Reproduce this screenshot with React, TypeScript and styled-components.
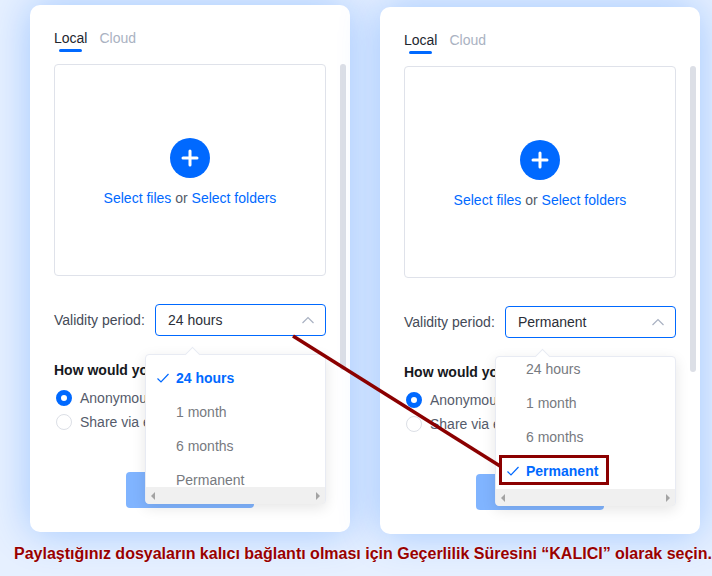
import React from 'react';
import styled, { createGlobalStyle } from 'styled-components';

const GlobalStyle = createGlobalStyle`
  html, body {
    margin: 0;
    padding: 0;
    background: #e6f0ff;
  }
`;

const Page = styled.div`
  position: relative;
  width: 712px;
  height: 576px;
  overflow: hidden;
  font-family: 'Liberation Sans', Arial, sans-serif;
  font-size: 14px;
  background: #e6f0ff;
`;

const Cards = styled.div`
  display: flex;
  align-items: flex-start;
  gap: 30px;
  padding-left: 30px;
  height: 545px;
`;

const Card = styled.section<{ $top: number }>`
  display: flex;
  gap: 14px;
  flex: none;
  box-sizing: border-box;
  width: 320px;
  height: 527px;
  margin-top: ${(p) => p.$top}px;
  padding: 24px 4px 0 24px;
  background: #fff;
  border-radius: 10px;
  box-shadow: 0 0 40px rgba(0, 105, 255, 0.3);
`;

const Content = styled.div`
  flex: none;
  width: 272px;
`;

const CardScroll = styled.div`
  flex: none;
  width: 6px;
  height: 306px;
  margin-top: 35px;
  border-radius: 3px;
  background: #dcdfe6;
`;

const Tabs = styled.div`
  display: flex;
  gap: 12px;
  height: 35px;
`;

const Tab = styled.div<{ $active?: boolean }>`
  position: relative;
  height: 18px;
  line-height: 18px;
  color: ${(p) => (p.$active ? '#22262e' : '#aab2c2')};

  ${(p) =>
    p.$active &&
    `
    &::after {
      content: '';
      position: absolute;
      left: 5px;
      right: 5px;
      top: 20px;
      height: 3px;
      border-radius: 2px;
      background: #0069ff;
    }
  `}
`;

const DropArea = styled.div`
  display: flex;
  flex-direction: column;
  align-items: center;
  box-sizing: border-box;
  height: 212px;
  padding-top: 73px;
  border: 1px solid #dfe2ea;
  border-radius: 4px;
`;

const AddCircle = styled.div`
  display: flex;
  align-items: center;
  justify-content: center;
  width: 40px;
  height: 40px;
  border-radius: 50%;
  background: #0069ff;
`;

const DropText = styled.div`
  margin-top: 12px;
  line-height: 16px;
  color: #555b68;
`;

const Link = styled.span`
  color: #0069ff;
`;

const ValidityRow = styled.div`
  position: relative;
  display: flex;
  align-items: center;
  justify-content: space-between;
  margin-top: 28px;
  height: 32px;
`;

const FieldLabel = styled.span`
  color: #444a57;
`;

const SelectBox = styled.div`
  display: flex;
  align-items: center;
  justify-content: space-between;
  box-sizing: border-box;
  width: 171px;
  height: 32px;
  padding: 0 11px 0 12px;
  border: 1px solid #0069ff;
  border-radius: 4px;
  color: #2b2f38;
`;

const Dropdown = styled.div`
  position: absolute;
  top: 50px;
  right: 0;
  z-index: 2;
  box-sizing: border-box;
  width: 181px;
  height: 150px;
  border: 1px solid #e8ebf3;
  border-radius: 4px;
  background: #fff;
  box-shadow: 0 4px 14px rgba(0, 0, 0, 0.1);

  &::before {
    content: '';
    position: absolute;
    top: -6px;
    left: 41px;
    width: 10px;
    height: 10px;
    background: #fff;
    border-top: 1px solid #e8ebf3;
    border-left: 1px solid #e8ebf3;
    transform: rotate(45deg);
  }
`;

const OptionViewport = styled.div`
  position: relative;
  height: 132px;
  overflow: hidden;
`;

const OptionList = styled.ul<{ $scroll: number }>`
  list-style: none;
  margin: ${(p) => 6 - p.$scroll}px 0 0;
  padding: 0;
`;

const Option = styled.li<{ $selected?: boolean }>`
  position: relative;
  height: 34px;
  line-height: 34px;
  padding-left: 30px;
  color: ${(p) => (p.$selected ? '#0069ff' : '#777a80')};
  font-weight: ${(p) => (p.$selected ? 700 : 400)};

  svg {
    position: absolute;
    left: 10px;
    top: 11px;
  }
`;

const HScroll = styled.div`
  display: flex;
  align-items: center;
  justify-content: space-between;
  height: 17px;
  padding: 0 5px;
  background: #f0f0f0;
  border-radius: 0 0 4px 4px;
`;

const Arrow = styled.span<{ $dir: 'left' | 'right' }>`
  width: 0;
  height: 0;
  border-top: 4px solid transparent;
  border-bottom: 4px solid transparent;
  ${(p) =>
    p.$dir === 'left'
      ? 'border-right: 4px solid #a3a3a3;'
      : 'border-left: 4px solid #a3a3a3;'}
`;

const Heading = styled.div`
  margin-top: 25px;
  height: 18px;
  line-height: 18px;
  font-weight: 700;
  color: #16181d;
`;

const RadioGroup = styled.div`
  display: flex;
  flex-direction: column;
  gap: 8px;
  margin-top: 11px;
  padding-left: 2px;
`;

const RadioRow = styled.label`
  display: flex;
  align-items: center;
  gap: 8px;
  height: 16px;
  color: #555b6b;
`;

const RadioDot = styled.span<{ $on?: boolean }>`
  flex: none;
  box-sizing: border-box;
  width: 16px;
  height: 16px;
  border-radius: 50%;
  border: ${(p) => (p.$on ? '5px solid #0069ff' : '1px solid #dcdfe6')};
  background: #fff;
`;

const Submit = styled.button`
  display: block;
  width: 128px;
  height: 36px;
  margin: 42px auto 0;
  border: 0;
  border-radius: 4px;
  background: #80b4ff;
  color: #fff;
  font: inherit;
`;

const Caption = styled.p`
  margin: 0;
  padding-left: 14px;
  white-space: nowrap;
  font-size: 16px;
  line-height: 18px;
  font-weight: 700;
  color: #990000;
  text-shadow: 0 0 2px rgba(255, 255, 255, 0.7);
`;

const Pointer = styled.svg`
  position: absolute;
  left: 0;
  top: 0;
  z-index: 3;
  pointer-events: none;
`;

const Highlight = styled.div`
  position: absolute;
  left: 499px;
  top: 455px;
  z-index: 3;
  box-sizing: border-box;
  width: 110px;
  height: 30px;
  border: 3px solid #8b0000;
`;

const periods = ['24 hours', '1 month', '6 months', 'Permanent'];

const CheckMark = () => (
  <svg width="14" height="12" viewBox="0 0 14 12" fill="none">
    <path d="M1.5 6.5 L5 10 L12.5 2" stroke="#0069ff" strokeWidth="1.2" />
  </svg>
);

const PlusMark = () => (
  <svg width="18" height="18" viewBox="0 0 18 18" fill="none">
    <path d="M9 2 V16 M2 9 H16" stroke="#fff" strokeWidth="3" strokeLinecap="round" />
  </svg>
);

const Chevron = () => (
  <svg width="12" height="8" viewBox="0 0 12 8" fill="none">
    <path d="M0.5 7 L6 1.5 L11.5 7" stroke="#a9b1c2" strokeWidth="1.2" />
  </svg>
);

type ShareCardProps = {
  top: number;
  selected: string;
  scroll: number;
};

const ShareCard = ({ top, selected, scroll }: ShareCardProps) => (
  <Card $top={top}>
    <Content>
      <Tabs>
        <Tab $active>Local</Tab>
        <Tab>Cloud</Tab>
      </Tabs>
      <DropArea>
        <AddCircle>
          <PlusMark />
        </AddCircle>
        <DropText>
          <Link>Select files</Link> or <Link>Select folders</Link>
        </DropText>
      </DropArea>
      <ValidityRow>
        <FieldLabel>Validity period:</FieldLabel>
        <SelectBox>
          {selected}
          <Chevron />
        </SelectBox>
        <Dropdown>
          <OptionViewport>
            <OptionList $scroll={scroll}>
              {periods.map((period) => (
                <Option key={period} $selected={period === selected}>
                  {period === selected && <CheckMark />}
                  {period}
                </Option>
              ))}
            </OptionList>
          </OptionViewport>
          <HScroll>
            <Arrow $dir="left" />
            <Arrow $dir="right" />
          </HScroll>
        </Dropdown>
      </ValidityRow>
      <Heading>How would you like to share?</Heading>
      <RadioGroup>
        <RadioRow>
          <RadioDot $on />
          Anonymous link
        </RadioRow>
        <RadioRow>
          <RadioDot />
          Share via email
        </RadioRow>
      </RadioGroup>
      <Submit>Share</Submit>
    </Content>
    <CardScroll />
  </Card>
);

const App = () => (
  <>
    <GlobalStyle />
    <Page>
      <Cards>
        <ShareCard top={5} selected="24 hours" scroll={0} />
        <ShareCard top={7} selected="Permanent" scroll={11} />
      </Cards>
      <Caption>
        Paylaştığınız dosyaların kalıcı bağlantı olması için Geçerlilik Süresini “KALICI” olarak seçin.
      </Caption>
      <Pointer width="712" height="576">
        <line x1="293" y1="336" x2="500" y2="466" stroke="#8b0000" strokeWidth="3.5" />
      </Pointer>
      <Highlight />
    </Page>
  </>
);

export default App;
